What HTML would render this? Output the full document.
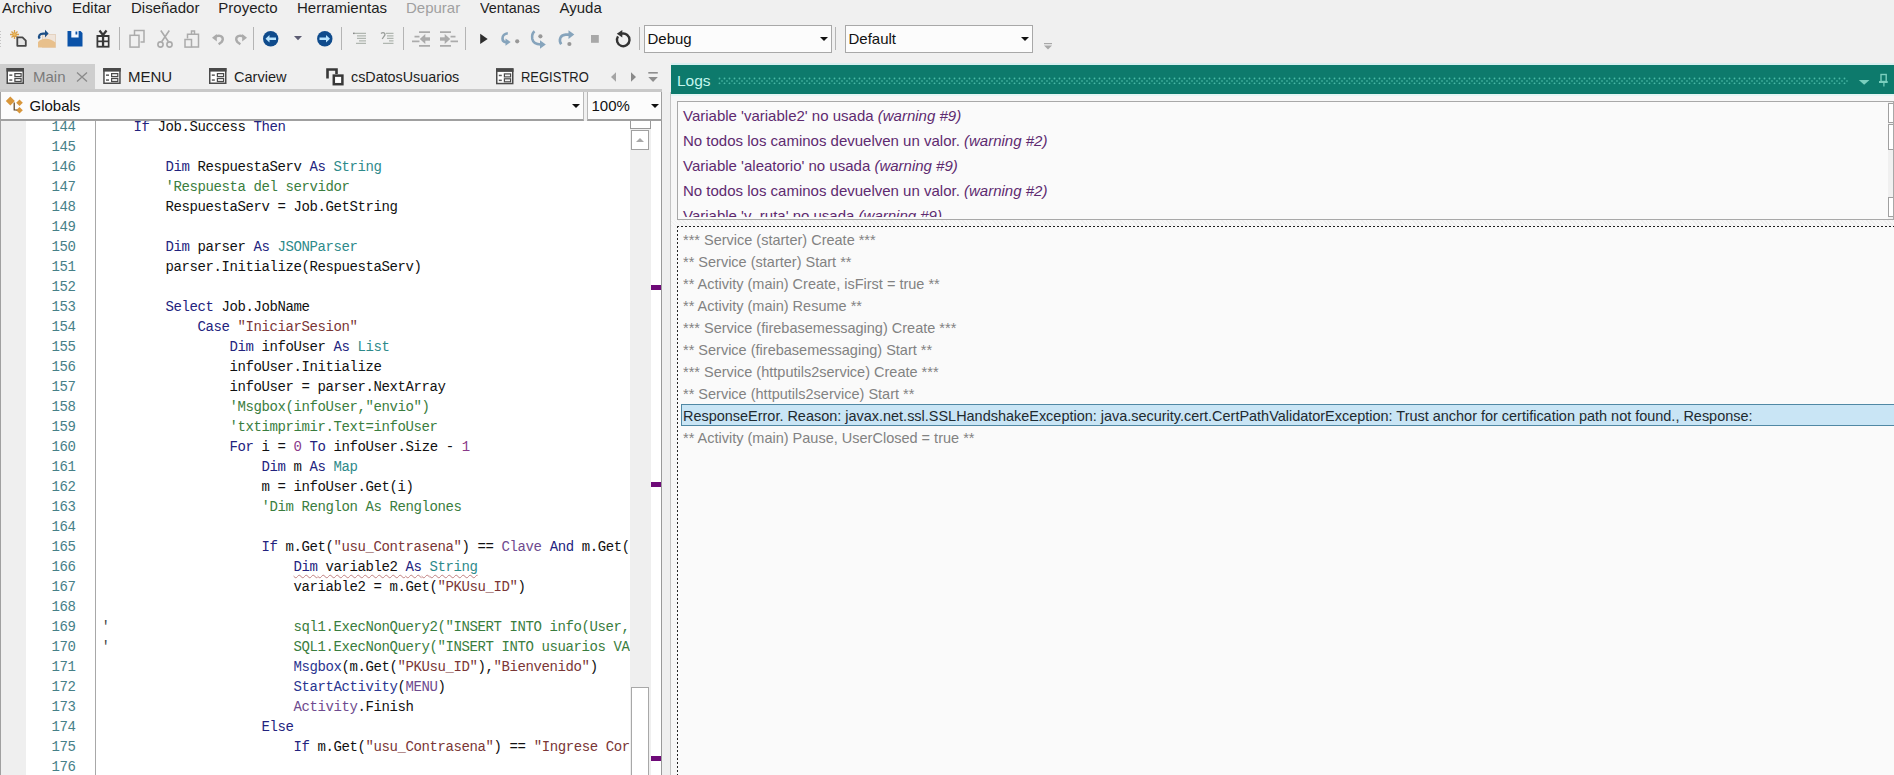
<!DOCTYPE html>
<html><head><meta charset="utf-8">
<style>
*{margin:0;padding:0;box-sizing:border-box}
html,body{width:1894px;height:775px;overflow:hidden;background:#f0f0f0;font-family:"Liberation Sans",sans-serif;position:relative}
.a{position:absolute}
.menu span{position:absolute;top:-1px;font-size:15px;color:#1e1e1e;white-space:nowrap}
.sep{position:absolute;width:1px;background:#b4b4b4}
.combo{position:absolute;background:#fcfcfc;border:1px solid #a8a8a8}
.combo .t{position:absolute;font-size:15px;color:#111;white-space:nowrap}
.tri{position:absolute;width:0;height:0;border-left:4px solid transparent;border-right:4px solid transparent;border-top:4px solid #111}
.tab{position:absolute;font-size:15px;color:#1e1e1e;white-space:nowrap;top:68px}
.code{position:absolute;left:0;top:0;font-family:"Liberation Mono",monospace;font-size:14px;letter-spacing:-0.4px;white-space:pre;color:#111}
.ln{position:absolute;font-family:"Liberation Mono",monospace;font-size:14px;letter-spacing:-0.4px;color:#468088;white-space:pre}
.k{color:#23237e}.b{color:#2a3590}.g{color:#444}.wv{text-decoration:underline wavy #c08080;text-decoration-thickness:1px;text-underline-offset:3px}.ty{color:#2e8a8a}.c{color:#3a7d3e}.s{color:#7a3636}.n{color:#8a3a8a}.p{color:#6e4a8e}
.warn{position:absolute;left:5px;font-size:15px;color:#5e2a70;white-space:nowrap}
.warn i{font-style:italic}
.log{position:absolute;left:682.5px;font-size:15px;color:#828282;white-space:nowrap;transform:scaleX(0.967);transform-origin:0 0}
</style></head><body>
<!-- MENU -->
<div class="menu">
<span style="left:2px">Archivo</span>
<span style="left:72px">Editar</span>
<span style="left:131px">Diseñador</span>
<span style="left:218.3px">Proyecto</span>
<span style="left:297px">Herramientas</span>
<span style="left:406px;color:#a0a0a0">Depurar</span>
<span style="left:480px;transform:scaleX(0.96);transform-origin:0 0">Ventanas</span>
<span style="left:559.5px">Ayuda</span>
</div>
<svg class="a" style="left:0;top:0" width="1060" height="62" viewBox="0 0 1060 62">
<!-- grip -->
<g fill="#c4c4c4"><rect x="0" y="31" width="1" height="1"/><rect x="0" y="34" width="1" height="1"/><rect x="0" y="37" width="1" height="1"/><rect x="0" y="40" width="1" height="1"/><rect x="0" y="43" width="1" height="1"/><rect x="0" y="46" width="1" height="1"/></g>
<!-- new -->
<g stroke="#d9a04a" stroke-width="1.3" fill="none"><path d="M10 34.5h9M14.5 30v9M11.5 31.5l6 6M17.5 31.5l-6 6"/></g>
<circle cx="14.5" cy="34.5" r="1.2" fill="#f0c060"/>
<path d="M17.3 37.3h5.2l3.3 3.3v5.2h-8.5z" fill="#e6e6e6" stroke="#474747" stroke-width="1.8" stroke-linejoin="round"/>
<!-- open -->
<rect x="42.5" y="34.5" width="13" height="12.8" fill="#efe4da" stroke="#e4d2c0" stroke-width="1"/>
<path d="M38 47.5v-5.5c4-4.5 12-4.5 17.5 0.5v5z" fill="#e8c08c"/>
<path d="M39.6 38.6c-1.6-2.6 0.2-5 3.6-5h2.6" stroke="#1d4f86" stroke-width="2.3" fill="none"/>
<path d="M45 29.8l3.6 3.8-3.6 3.8z" fill="#1d4f86"/>
<!-- save -->
<path d="M67.5 31h13l2 2v13.5h-15z" fill="#0a52a8"/>
<rect x="71.3" y="31" width="7.3" height="6.5" fill="#f4f8ff"/>
<rect x="75.5" y="31.5" width="1.8" height="3" fill="#0a52a8"/>
<!-- gift -->
<g fill="#383838"><rect x="96.5" y="35" width="13" height="12.6"/></g>
<g fill="#f6f6f6"><rect x="98.3" y="37" width="3.6" height="3.5"/><rect x="104.2" y="37" width="3.6" height="3.5"/><rect x="98.3" y="42.2" width="3.6" height="3.6"/><rect x="104.2" y="42.2" width="3.6" height="3.6"/></g>
<path d="M103 35l-3.5-4.5M103 35l3.5-4.5" stroke="#383838" stroke-width="2.2"/>
<!-- copy -->
<g fill="none" stroke="#ababab" stroke-width="1.5"><path d="M134.5 35v-4.5h9.5v11.5h-3.5"/><rect x="130" y="35.3" width="9" height="11.8"/></g>
<!-- cut -->
<g fill="none" stroke="#ababab" stroke-width="1.6"><path d="M160.8 30.5l7.5 11M169.3 30.5l-7.5 11"/><circle cx="160.5" cy="44.5" r="2.6"/><circle cx="169.5" cy="44.5" r="2.6"/></g>
<!-- paste -->
<g fill="none" stroke="#ababab" stroke-width="1.5"><path d="M191.5 34v-3h3v3"/><path d="M187.5 38.5v-4.3h11v12.8h-6.5"/><rect x="185" y="39.5" width="6.5" height="7.6"/></g>
<!-- undo / redo -->
<g fill="none" stroke="#ababab" stroke-width="2.4"><path d="M214.5 37.5c3.2-2.8 8.3-2.2 8.3 1.8c0 2.2-1.8 3.6-4.2 5"/><path d="M244.5 37.5c-3.2-2.8-8.3-2.2-8.3 1.8c0 2.2 1.8 3.6 4.2 5"/></g>
<path d="M212 37.8l4.8-3.8v7.5z" fill="#ababab"/><path d="M247 37.8l-4.8-3.8v7.5z" fill="#ababab"/>
<!-- back / forward -->
<circle cx="270.7" cy="38.8" r="7.7" fill="#0f4b8c"/>
<path d="M265.5 38.8l4-3.8v2.5h6.5v2.6h-6.5v2.5z" fill="#b8e4ff"/>
<path d="M294 36h8l-4 4.3z" fill="#5c5c72"/>
<circle cx="324.8" cy="38.7" r="7.7" fill="#0f4b8c"/>
<path d="M330 38.7l-4-3.8v2.5h-6.5v2.6h6.5v2.5z" fill="#b8e4ff"/>
<!-- comment / uncomment -->
<g stroke="#b0b6b0" stroke-width="1.2"><path d="M354 33.3h12M357 35.8h9M357 38.3h9M359 40.8h7M356 43.3h10"/></g>
<rect x="353" y="32.6" width="1.5" height="1.5" fill="#8a8a8a"/>
<g stroke="#b0b6b0" stroke-width="1.2"><path d="M386 33.3h7.5M387 35.8h6.5M387 38.3h6.5M389 40.8h4.5M383 43.3h10.5"/></g>
<path d="M381 33.6c1.8-1.6 4.6-1 3.8 1.6l-2.6 3.8" stroke="#9a9e9a" stroke-width="1.3" fill="none"/>
<!-- outdent / indent -->
<g stroke="#ababab" stroke-width="1.8"><path d="M419 32.1h11M419 45.9h11M414.5 36.6h5M412 41.4h7.5M424 39h6"/></g>
<path d="M419.8 39l5.5-5v10z" fill="#ababab"/><rect x="423" y="37.3" width="7" height="3.4" fill="#ababab"/>
<g stroke="#ababab" stroke-width="1.8"><path d="M440 32.1h11M440 45.9h11M450.5 36.6h5M450.5 41.4h7.5M440 39h6"/></g>
<path d="M450.2 39l-5.5-5v10z" fill="#ababab"/><rect x="440" y="37.3" width="7" height="3.4" fill="#ababab"/>
<!-- play -->
<path d="M480.2 33.8v10.3l7.5-5.15z" fill="#2e2e2e"/>
<!-- step over -->
<g fill="none" stroke="#86a4bc" stroke-width="2.6" stroke-linecap="butt">
<path d="M507.8 33.2c-3.2 0.3-5.3 2.6-5.3 5.2c0 2.3 1.6 3.6 3.6 3.9"/>
<path d="M534.5 31.3c-2.2 1.8-2.7 5-2.2 7.8c0.8 3.8 3.8 5.4 8.4 5.4"/>
<path d="M561.2 44.3c-2.6-4-1.4-9.3 4.5-9.7h4"/>
</g>
<path d="M505.5 38.5l5.2 3.6-5.2 3.6z" fill="#86a4bc"/>
<path d="M540 40.3l5.8 4.2-5.8 4.2z" fill="#86a4bc"/>
<path d="M568.5 30.2l5.8 4.4-5.8 4.4z" fill="#86a4bc"/>
<g fill="#989898"><circle cx="517.2" cy="41.3" r="2.1"/><circle cx="540.4" cy="36.3" r="2.1"/><circle cx="569.4" cy="44" r="2.1"/></g>
<!-- stop -->
<rect x="591" y="35" width="7.8" height="7.8" fill="#a8a8a8"/>
<!-- restart -->
<path d="M618 36.3a6.3 6.3 0 1 0 3.8-2.6" fill="none" stroke="#333" stroke-width="2.4"/>
<path d="M616.8 33.8l5.5-3.8v7.6z" fill="#333"/>
<!-- overflow -->
<g fill="#a8a8a8"><rect x="1044" y="43" width="8" height="1.2"/><path d="M1044 45.5h8l-4 4z"/></g>
</svg>
<!-- TOOLBAR separators -->
<div class="sep" style="left:119px;top:27px;height:23px"></div>
<div class="sep" style="left:253px;top:27px;height:23px"></div>
<div class="sep" style="left:341px;top:27px;height:23px"></div>
<div class="sep" style="left:403px;top:27px;height:23px"></div>
<div class="sep" style="left:465px;top:27px;height:23px"></div>
<div class="sep" style="left:639px;top:27px;height:23px"></div>
<div class="sep" style="left:835px;top:27px;height:23px"></div>
<div class="combo" style="left:644px;top:25px;width:188px;height:28px"><span class="t" style="left:2.5px;top:4px">Debug</span><div class="tri" style="left:175px;top:11px"></div></div>
<div class="combo" style="left:845px;top:25px;width:188px;height:28px"><span class="t" style="left:2.5px;top:4px">Default</span><div class="tri" style="left:175px;top:11px"></div></div>

<!-- TAB STRIP -->
<div class="a" style="left:0;top:64px;width:95px;height:26px;background:#cecece"></div>
<div class="a" style="left:0;top:89px;width:662px;height:3px;background:#c9c9c9"></div>
<span class="tab" style="left:33px;color:#7a7a7a">Main</span>
<span class="tab" style="left:128px">MENU</span>
<span class="tab" style="left:234px;transform:scaleX(0.97);transform-origin:0 0">Carview</span>
<span class="tab" style="left:350.5px;transform:scaleX(0.955);transform-origin:0 0">csDatosUsuarios</span>
<span class="tab" style="left:521px;transform:scaleX(0.865);transform-origin:0 0">REGISTRO</span>

<!-- GLOBALS -->
<div class="a" style="left:0;top:92px;width:584px;height:29px;background:#fcfcfc;border-left:1px solid #a0a0a0;border-right:1px solid #b8b8b8;border-bottom:2px solid #a0a0a0"></div>
<span class="a" style="left:29.5px;top:97px;font-size:15px;color:#111">Globals</span>
<div class="tri" style="left:572px;top:104px"></div>
<div class="a" style="left:587px;top:92px;width:75px;height:29px;background:#fcfcfc;border-left:1px solid #b8b8b8;border-bottom:2px solid #a0a0a0;border-right:1px solid #a0a0a0"></div>
<span class="a" style="left:591.5px;top:97px;font-size:15px;color:#111">100%</span>
<div class="tri" style="left:651px;top:104px"></div>

<svg class="a" style="left:0;top:60px" width="670" height="64" viewBox="0 60 670 64"><g transform="translate(6.5,68)"><rect x="0.75" y="0.75" width="16" height="14.5" fill="#fff" stroke="#4a4a4a" stroke-width="1.5"/><rect x="0" y="0" width="17.5" height="3.6" fill="#4a4a4a"/><rect x="2.8" y="6.4" width="3" height="1.5" fill="#5a5a5a"/><rect x="2.8" y="11.3" width="3" height="1.5" fill="#5a5a5a"/><rect x="8.4" y="5.6" width="6.2" height="3" fill="#f2f2f2" stroke="#4a4a4a" stroke-width="1.2"/><rect x="8.4" y="10.5" width="6.2" height="3" fill="#f2f2f2" stroke="#4a4a4a" stroke-width="1.2"/></g><g transform="translate(103.2,68)"><rect x="0.75" y="0.75" width="16" height="14.5" fill="#fff" stroke="#4a4a4a" stroke-width="1.5"/><rect x="0" y="0" width="17.5" height="3.6" fill="#4a4a4a"/><rect x="2.8" y="6.4" width="3" height="1.5" fill="#5a5a5a"/><rect x="2.8" y="11.3" width="3" height="1.5" fill="#5a5a5a"/><rect x="8.4" y="5.6" width="6.2" height="3" fill="#f2f2f2" stroke="#4a4a4a" stroke-width="1.2"/><rect x="8.4" y="10.5" width="6.2" height="3" fill="#f2f2f2" stroke="#4a4a4a" stroke-width="1.2"/></g><g transform="translate(209,68)"><rect x="0.75" y="0.75" width="16" height="14.5" fill="#fff" stroke="#4a4a4a" stroke-width="1.5"/><rect x="0" y="0" width="17.5" height="3.6" fill="#4a4a4a"/><rect x="2.8" y="6.4" width="3" height="1.5" fill="#5a5a5a"/><rect x="2.8" y="11.3" width="3" height="1.5" fill="#5a5a5a"/><rect x="8.4" y="5.6" width="6.2" height="3" fill="#f2f2f2" stroke="#4a4a4a" stroke-width="1.2"/><rect x="8.4" y="10.5" width="6.2" height="3" fill="#f2f2f2" stroke="#4a4a4a" stroke-width="1.2"/></g><g transform="translate(496,68.3)"><rect x="0.75" y="0.75" width="16" height="14.5" fill="#fff" stroke="#4a4a4a" stroke-width="1.5"/><rect x="0" y="0" width="17.5" height="3.6" fill="#4a4a4a"/><rect x="2.8" y="6.4" width="3" height="1.5" fill="#5a5a5a"/><rect x="2.8" y="11.3" width="3" height="1.5" fill="#5a5a5a"/><rect x="8.4" y="5.6" width="6.2" height="3" fill="#f2f2f2" stroke="#4a4a4a" stroke-width="1.2"/><rect x="8.4" y="10.5" width="6.2" height="3" fill="#f2f2f2" stroke="#4a4a4a" stroke-width="1.2"/></g><path d="M327.5 78.5v-9h9v4.5" fill="none" stroke="#383838" stroke-width="2.6"/><rect x="333.8" y="75.6" width="8.6" height="8.6" fill="#fff" stroke="#383838" stroke-width="2.5"/><path d="M77 72.5l10 9M87 72.5l-10 9" stroke="#8a8a8a" stroke-width="1.3"/><path d="M616 72.3v9.5l-5-4.75z" fill="#a4a4a4"/><path d="M631 72.3v9.5l5-4.75z" fill="#8a8a8a"/><g fill="#8e8e8e"><rect x="648.3" y="72" width="9.5" height="1.6"/><path d="M648.3 77h9.5l-4.75 5z"/></g><g fill="#d8963a"><path d="M10.3 96.5l4.5 4.5-4.5 4.5-4.5-4.5z"/><path d="M19.5 99.5l3.3 3.3-3.3 3.3-3.3-3.3z"/><path d="M19.5 107l3.3 3.3-3.3 3.3-3.3-3.3z"/></g><path d="M14.2 102.5v7.5h3" fill="none" stroke="#5a4020" stroke-width="1.2"/></svg>
<!-- CODE AREA -->
<div class="a" id="editor" style="left:0;top:121px;width:662px;height:654px;background:#fff;border-left:1px solid #a0a0a0;overflow:hidden">
  <div class="a" style="left:0;top:0;width:25px;height:655px;background:#efefef"></div>
  <div class="a" style="left:94px;top:0;width:1px;height:655px;background:#a8a8a8"></div>
  <div class="ln" style="left:50.5px;top:-4px;width:24px;text-align:right;line-height:20px">144
145
146
147
148
149
150
151
152
153
154
155
156
157
158
159
160
161
162
163
164
165
166
167
168
169
170
171
172
173
174
175
176</div>
  <div class="a" style="left:0;top:0;width:629px;height:655px;overflow:hidden"><div class="code" style="left:100.5px;top:-4px;line-height:20px">    <span class="k">If</span> Job.Success <span class="k">Then</span>

        <span class="k">Dim</span> RespuestaServ <span class="k">As</span> <span class="ty">String</span>
        <span class="c">'Respuesta del servidor</span>
        RespuestaServ = Job.GetString

        <span class="k">Dim</span> parser <span class="k">As</span> <span class="ty">JSONParser</span>
        parser.Initialize(RespuestaServ)

        <span class="k">Select</span> Job.JobName
            <span class="k">Case</span> <span class="s">"IniciarSesion"</span>
                <span class="k">Dim</span> infoUser <span class="k">As</span> <span class="ty">List</span>
                infoUser.Initialize
                infoUser = parser.NextArray
                <span class="c">'Msgbox(infoUser,"envio")</span>
                <span class="c">'txtimprimir.Text=infoUser</span>
                <span class="k">For</span> i = <span class="n">0</span> <span class="k">To</span> infoUser.Size - <span class="n">1</span>
                    <span class="k">Dim</span> m <span class="k">As</span> <span class="ty">Map</span>
                    m = infoUser.Get(i)
                    <span class="c">'Dim Renglon As Renglones</span>

                    <span class="k">If</span> m.Get(<span class="s">"usu_Contrasena"</span>) == <span class="p">Clave</span> <span class="k">And</span> m.Get(<span class="s">"usu_Usuario"</span>)
                        <span class="wv"><span class="k">Dim</span> variable2 <span class="k">As</span> <span class="ty">String</span></span>
                        variable2 = m.Get(<span class="s">"PKUsu_ID"</span>)

<span class="g">'</span><span class="c">                       sql1.ExecNonQuery2("INSERT INTO info(User, Pass) VALUES (?,?)")</span>
<span class="g">'</span><span class="c">                       SQL1.ExecNonQuery("INSERT INTO usuarios VALUES")</span>
                        <span class="b">Msgbox</span>(m.Get(<span class="s">"PKUsu_ID"</span>),<span class="s">"Bienvenido"</span>)
                        <span class="b">StartActivity</span>(<span class="p">MENU</span>)
                        <span class="p">Activity</span>.Finish
                    <span class="k">Else</span>
                        <span class="k">If</span> m.Get(<span class="s">"usu_Contrasena"</span>) == <span class="s">"Ingrese Correo"</span>
</div></div>
  <!-- scrollbar -->
  <div class="a" style="left:629px;top:0;width:21px;height:655px;background:#efefef"></div>
  <div class="a" style="left:629px;top:0;width:21px;height:8px;background:#fff;border:1px solid #9a9a9a;border-top:none"></div>
  <div class="a" style="left:630px;top:9px;width:18px;height:20px;background:#fff;border:1px solid #a0a0a0"></div>
  <div class="tri" style="left:635px;top:17px;border-top:none;border-bottom:4px solid #a8a8a8;border-left-width:4px;border-right-width:4px"></div>
  <div class="a" style="left:630px;top:566px;width:18px;height:100px;background:#fff;border:1px solid #a8a8a8"></div>
  <div class="a" style="left:650px;top:0;width:11px;height:655px;background:#fff;border-right:1px solid #9a9a9a"></div>
  <div class="a" style="left:650px;top:164px;width:10px;height:5px;background:#6e0a78"></div>
  <div class="a" style="left:650px;top:361px;width:10px;height:5px;background:#6e0a78"></div>
  <div class="a" style="left:650px;top:635px;width:10px;height:5px;background:#6e0a78"></div>
</div>

<!-- SPLITTER -->
<div class="a" style="left:662px;top:92px;width:9px;height:683px;background:#efefef;border-right:1px solid #c4c4c4"></div>

<!-- LOGS PANEL -->
<div class="a" style="left:671px;top:63px;width:1223px;height:2px;background:#d8f0f0"></div>
<div class="a" style="left:671px;top:65px;width:1223px;height:29px;background:#0d7a6c"></div>
<span class="a" style="left:677px;top:72px;font-size:15.5px;color:#c4f6ee">Logs</span>
<svg class="a" style="left:718px;top:77px" width="1130" height="8"><defs><pattern id="dp" x="0" y="0" width="5" height="5" patternUnits="userSpaceOnUse"><circle cx="1.5" cy="1.5" r="0.9" fill="#48b8a6"/><circle cx="4" cy="4" r="0.9" fill="#3aa896"/></pattern></defs><rect x="0" y="0" width="1130" height="7.2" fill="url(#dp)"/></svg>
<svg class="a" style="left:1850px;top:66px" width="44" height="28"><path d="M8.8 13.9h10.7l-5.35 4.8z" fill="#7acfbe"/><g fill="none" stroke="#7acfbe" stroke-width="1.4"><rect x="31" y="8.5" width="5.2" height="7"/></g><rect x="29" y="15" width="8.7" height="2" fill="#7acfbe"/><rect x="33.3" y="17" width="1.2" height="3.5" fill="#7acfbe"/></svg>
<div class="a" style="left:671px;top:94px;width:1223px;height:681px;background:#f7f7f7"></div>
<div class="a" style="left:671px;top:94px;width:1223px;height:2px;background:#e4f6f4"></div>
<div class="a" style="left:677px;top:101px;width:1217px;height:119px;background:#fafafa;border:1px solid #a8a8a8;overflow:hidden">
<div class="a" style="left:0;top:0;width:1210px;height:115px;overflow:hidden">
<span class="warn" id="w0" style="top:5px">Variable 'variable2' no usada <i>(warning #9)</i></span>
<span class="warn" id="w1" style="top:30px">No todos los caminos devuelven un valor. <i>(warning #2)</i></span>
<span class="warn" id="w2" style="top:55px">Variable 'aleatorio' no usada <i>(warning #9)</i></span>
<span class="warn" id="w3" style="top:80px">No todos los caminos devuelven un valor. <i>(warning #2)</i></span>
<span class="warn" id="w4" style="top:105px">Variable 'v_ruta' no usada <i>(warning #9)</i></span>
</div>
<div class="a" style="left:1210px;top:0;width:8px;height:117px;background:#f0f0f0"></div>
<div class="a" style="left:1210px;top:1px;width:8px;height:20px;background:#fff;border:1px solid #a0a0a0"></div>
<div class="a" style="left:1210px;top:22px;width:8px;height:26px;background:#fff;border:1px solid #a0a0a0"></div>
<div class="a" style="left:1210px;top:95px;width:8px;height:20px;background:#fff;border:1px solid #a0a0a0"></div>
</div>
<div class="a" style="left:677px;top:226px;width:1217px;height:549px;background:#fafafa"></div>
<div class="a" style="left:677px;top:226px;width:1217px;height:1px;background:repeating-linear-gradient(90deg,#222 0 2px,transparent 2px 4px)"></div>
<div class="a" style="left:677px;top:226px;width:1px;height:549px;background:repeating-linear-gradient(180deg,#222 0 2px,transparent 2px 4px)"></div>
<div class="a" style="left:671px;top:220px;width:1223px;height:6px;background:repeating-linear-gradient(45deg,#f0f0f0 0 1px,#f8f8f8 1px 3px)"></div>
<span class="log" id="l0" style="top:231px">*** Service (starter) Create ***</span>
<span class="log" id="l1" style="top:253px">** Service (starter) Start **</span>
<span class="log" id="l2" style="top:275px">** Activity (main) Create, isFirst = true **</span>
<span class="log" id="l3" style="top:297px">** Activity (main) Resume **</span>
<span class="log" id="l4" style="top:319px">*** Service (firebasemessaging) Create ***</span>
<span class="log" id="l5" style="top:341px">** Service (firebasemessaging) Start **</span>
<span class="log" id="l6" style="top:363px">*** Service (httputils2service) Create ***</span>
<span class="log" id="l7" style="top:385px">** Service (httputils2service) Start **</span>
<div class="a" style="left:681px;top:404px;width:1220px;height:22px;background:#c9e5f5;border:1px solid #5088a4"></div>
<span class="log" id="l8" style="top:407px;color:#1e2a30;transform:scaleX(0.9635);transform-origin:0 0">ResponseError. Reason: javax.net.ssl.SSLHandshakeException: java.security.cert.CertPathValidatorException: Trust anchor for certification path not found., Response: </span>
<span class="log" id="l9" style="top:429px">** Activity (main) Pause, UserClosed = true **</span>


</body></html>
